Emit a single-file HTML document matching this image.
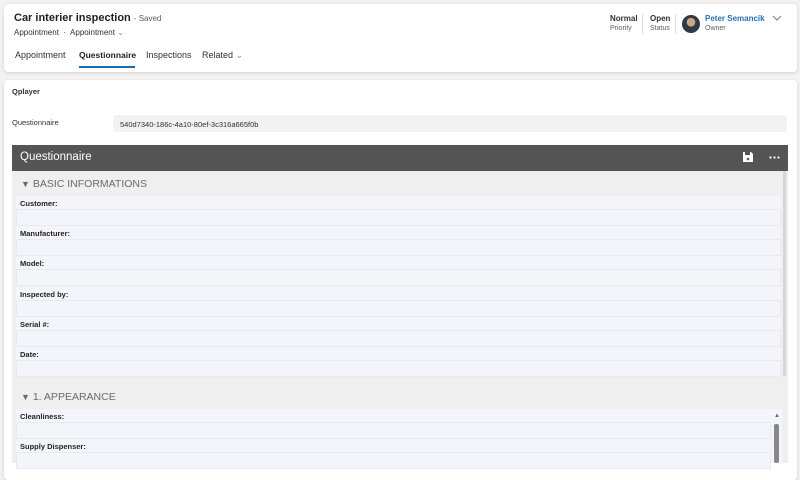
<!DOCTYPE html>
<html><head><meta charset="utf-8"><style>
*{box-sizing:border-box;margin:0;padding:0}
body{width:800px;height:463px;overflow:hidden;background:#f3f2f1;font-family:"Liberation Sans",sans-serif;position:relative;color:#323130}
.a{position:absolute;white-space:nowrap}
.card{background:#fff;border-radius:4px;box-shadow:0 1px 3px rgba(0,0,0,.15)}
.lbl{position:absolute;left:16px;width:765px;height:13px;background:#f4f5fa;font-size:7.5px;font-weight:bold;color:#222;padding:3px 0 0 4px}
.fld{position:absolute;left:16px;width:765px;height:17px;background:#f4f5fa;border:1px solid #e9eaef}
.sec{position:absolute;left:12px;width:770px;background:#efefef;color:#6a6a6a;font-size:10.5px}
</style></head><body>
<div class="a card" style="left:4px;top:4px;width:793px;height:68px"></div>
<div class="a" style="left:14px;top:12px;font-size:11px;font-weight:bold;color:#201f1e">Car interier inspection <span style="font-weight:normal;font-size:8px;color:#605e5c">- Saved</span></div>
<div class="a" style="left:14px;top:28px;font-size:8px;color:#323130">Appointment &nbsp;·&nbsp; Appointment <span style="color:#888">⌄</span></div>
<div class="a" style="left:15px;top:50px;font-size:9px;color:#323130">Appointment</div>
<div class="a" style="left:79px;top:50px;font-size:8.5px;font-weight:bold;color:#201f1e">Questionnaire</div>
<div class="a" style="left:79px;top:66px;width:56px;height:2px;background:#0f6cbd"></div>
<div class="a" style="left:146px;top:50px;font-size:9px">Inspections</div>
<div class="a" style="left:202px;top:50px;font-size:9px">Related <span style="color:#888">⌄</span></div>
<div class="a" style="left:610px;top:14px;font-size:8px;font-weight:bold">Normal</div>
<div class="a" style="left:610px;top:25px;font-size:7px;color:#605e5c">Priority</div>
<div class="a" style="left:642px;top:14px;width:1px;height:20px;background:#e1dfdd"></div>
<div class="a" style="left:650px;top:14px;font-size:8px;font-weight:bold">Open</div>
<div class="a" style="left:650px;top:25px;font-size:7px;color:#605e5c">Status</div>
<div class="a" style="left:675px;top:14px;width:1px;height:20px;background:#e1dfdd"></div>
<div class="a" style="left:682px;top:15px;width:18px;height:18px;border-radius:50%;background:radial-gradient(circle at 50% 40%,#c9a58a 0 30%,#3a3a3a 31% 45%,#2a3a4a 46%)"></div>
<div class="a" style="left:705px;top:14px;font-size:8px;font-weight:bold;color:#2b6fb5">Peter Semancik</div>
<div class="a" style="left:705px;top:25px;font-size:7px;color:#605e5c">Owner</div>
<svg class="a" style="left:772px;top:15px" width="10" height="6" viewBox="0 0 10 6"><path d="M1 1l4 4 4-4" fill="none" stroke="#777" stroke-width="1"/></svg>

<div class="a card" style="left:4px;top:80px;width:793px;height:400px"></div>
<div class="a" style="left:12px;top:87px;font-size:7.5px;font-weight:bold">Qplayer</div>
<div class="a" style="left:12px;top:118px;font-size:7.5px;color:#323130">Questionnaire</div>
<div class="a" style="left:113px;top:115px;width:674px;height:17px;background:#f3f2f1;border-radius:3px;font-size:7.5px;padding:5px 0 0 7px">540d7340-186c-4a10-80ef-3c316a665f0b</div>

<div class="a" style="left:12px;top:145px;width:776px;height:26px;background:#555;color:#fff;font-size:11.5px;padding:6px 0 0 8px">Questionnaire</div>
<svg class="a" style="left:742px;top:151px" width="12" height="12" viewBox="0 0 12 12"><path d="M1 1h8l2 2v8H1z" fill="#fff"/><rect x="3" y="1" width="5" height="3" fill="#555"/><circle cx="6" cy="8" r="1.3" fill="#555"/></svg>
<svg class="a" style="left:769px;top:156px" width="11" height="3" viewBox="0 0 11 3"><circle cx="1.5" cy="1.5" r="1.1" fill="#fff"/><circle cx="5.5" cy="1.5" r="1.1" fill="#fff"/><circle cx="9.5" cy="1.5" r="1.1" fill="#fff"/></svg>
<div class="a" style="left:12px;top:171px;width:776px;height:292px;background:#efefef"></div>
<div class="a" style="left:783px;top:171px;width:3px;height:205px;background:#d5d5d5"></div>
<div class="sec" style="top:171px;height:25px;padding:7px 0 0 9px"><span style="font-size:9px">▼</span> BASIC INFORMATIONS</div>
<div class="lbl" style="top:196px">Customer:</div><div class="fld" style="top:209px"></div>
<div class="lbl" style="top:226px">Manufacturer:</div><div class="fld" style="top:239px"></div>
<div class="lbl" style="top:256px">Model:</div><div class="fld" style="top:269px"></div>
<div class="lbl" style="top:287px">Inspected by:</div><div class="fld" style="top:300px"></div>
<div class="lbl" style="top:317px">Serial #:</div><div class="fld" style="top:330px"></div>
<div class="lbl" style="top:347px">Date:</div><div class="fld" style="top:360px"></div>
<div class="sec" style="top:377px;height:32px;padding:14px 0 0 9px"><span style="font-size:9px">▼</span> 1. APPEARANCE</div>
<div class="a" style="left:16px;top:409px;width:766px;height:54px;background:#f4f5fa"></div>
<div class="lbl" style="top:409px;width:755px">Cleanliness:</div><div class="fld" style="top:422px;width:755px"></div>
<div class="lbl" style="top:439px;width:755px">Supply Dispenser:</div><div class="fld" style="top:452px;width:755px"></div>
<div class="a" style="left:774px;top:413px;font-size:6px;color:#666">▲</div>
<div class="a" style="left:774px;top:424px;width:5px;height:39px;background:#888;border-radius:2px"></div>
</body></html>
